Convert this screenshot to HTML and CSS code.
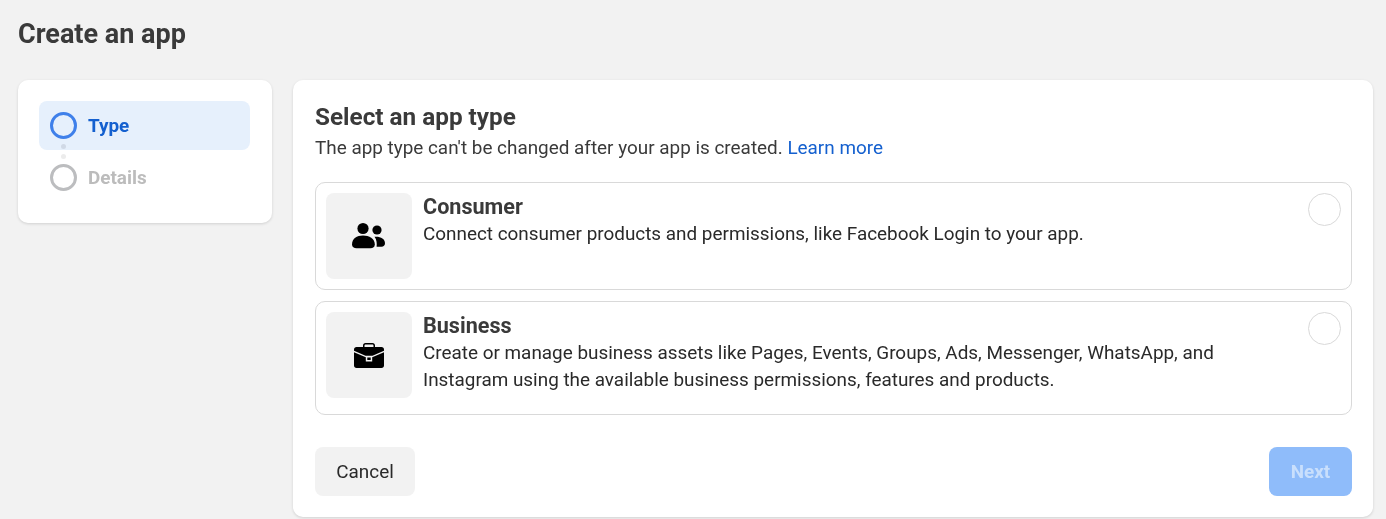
FILE: index.html
```html
<!DOCTYPE html>
<html lang="en">
<head>
<meta charset="utf-8">
<title>Create an app</title>
<link rel="stylesheet" href="styles.css">
</head>
<body>
<div class="page">
<h1 class="page-title">Create an app</h1>
<div class="layout">
  <aside class="card steps">
    <div class="step step-active">
      <span class="step-ring"></span>
      <span class="step-label">Type</span>
    </div>
    <span class="step-dot dot-one"></span>
    <span class="step-dot dot-two"></span>
    <div class="step step-idle">
      <span class="step-ring"></span>
      <span class="step-label">Details</span>
    </div>
  </aside>
  <main class="card panel">
    <h2 class="panel-title">Select an app type</h2>
    <p class="panel-sub">The app type can't be changed after your app is created. <a class="link" href="#">Learn more</a></p>
    <div class="option option-consumer">
      <div class="option-icon">
        <svg width="34" height="28" viewBox="0 0 34 28" aria-hidden="true">
          <circle cx="11" cy="6.500" r="5.600"/>
          <path d="M0 22.500C0 16.500 4.800 13.500 11 13.500C17.200 13.500 22.800 16.500 22.800 22.500C22.800 25 21 26.300 18.500 26.300H4.500C2 26.300 0 25 0 22.500Z"/>
          <circle cx="25" cy="8" r="4.600"/>
          <path d="M22.500 14.800C28 14.200 33 16.500 33 21.300C33 23.600 31.500 24.800 29.500 24.800H24.600C25 21.500 24.800 17.800 22.500 14.800Z"/>
        </svg>
      </div>
      <div class="option-text">
        <h3 class="option-title">Consumer</h3>
        <p class="option-desc">Connect consumer products and permissions, like Facebook Login to your app.</p>
      </div>
      <span class="radio"></span>
    </div>
    <div class="option option-business">
      <div class="option-icon">
        <svg width="30" height="26" viewBox="0 0 30 26" aria-hidden="true">
          <path d="M9 5V3.500C9 2 10 1 11.500 1H18.500C20 1 21 2 21 3.500V5H19.500V3.800C19.500 3 19 2.500 18.200 2.500H11.800C11 2.500 10.500 3 10.500 3.800V5Z"/>
          <path d="M2.500 5H27.500C29 5 30 6 30 7.500V8.800L18.500 13.800H11.500L0 8.800V7.500C0 6 1 5 2.500 5Z"/>
          <path d="M0 10.200L11.800 15.200V19.500H18.200V15.200L30 10.200V23.500C30 25 29 26 27.500 26H2.500C1 26 0 25 0 23.500Z"/>
          <rect x="13.300" y="15.500" width="3.400" height="2.500"/>
        </svg>
      </div>
      <div class="option-text">
        <h3 class="option-title">Business</h3>
        <p class="option-desc">Create or manage business assets like Pages, Events, Groups, Ads, Messenger, WhatsApp, and Instagram using the available business permissions, features and products.</p>
      </div>
      <span class="radio"></span>
    </div>
    <div class="actions">
      <button class="btn btn-cancel" type="button">Cancel</button>
      <button class="btn btn-next" type="button">Next</button>
    </div>
  </main>
</div>
</div>
</body>
</html>
```
FILE: styles.css
```css
* { box-sizing: border-box; }
html, body { height: 100%; }
body {
  margin: 0;
  background: #f2f2f2;
  font-family: Roboto, "Liberation Sans", sans-serif;
  color: #1c1e21;
  overflow: hidden;
}
.page {
  height: 100%;
  padding: 0 13px 0 18px;
  will-change: transform;
}
.page-title {
  margin: 0;
  padding-top: 19px;
  height: 80px;
  font-size: 27px;
  line-height: 30px;
  font-weight: 700;
  color: #3a3a3a;
}
.layout {
  display: flex;
  align-items: flex-start;
  gap: 21px;
}
.card {
  background: #fff;
  border-radius: 10px;
  box-shadow: 0 1px 3px rgba(0, 0, 0, .14);
}
.steps {
  position: relative;
  flex: 0 0 254px;
  height: 143px;
  padding: 21px 22px 0 21px;
}
.step {
  display: flex;
  align-items: center;
  gap: 11px;
  height: 49px;
  padding-left: 11px;
  border-radius: 8px;
  font-size: 18.9px;
  font-weight: 700;
}
.step-active { background: #e6f0fc; color: #1460cf; }
.step-idle { margin-top: 3px; color: #bcbcbc; }
.step-ring {
  width: 27px;
  height: 27px;
  border-radius: 50%;
  border: 3px solid #bcbdbf;
  flex: none;
}
.step-active .step-ring { border-color: #3f80ea; }
.step-dot {
  position: absolute;
  left: 43px;
  width: 5px;
  height: 5px;
  border-radius: 50%;
}
.dot-one { top: 63.500px; background: #d0d9e6; }
.dot-two { top: 73.500px; background: #ececec; }
.panel {
  flex: 1;
  height: 437px;
  padding: 22px 21px 0 22px;
}
.panel-title {
  margin: 0;
  font-size: 24.300px;
  line-height: 30px;
  font-weight: 700;
  color: #3a3a3a;
}
.panel-sub {
  margin: 3px 0 0;
  font-size: 18.900px;
  line-height: 26px;
  color: #3a3a3a;
}
.link { color: #1460cf; text-decoration: none; }
.option {
  display: flex;
  align-items: flex-start;
  gap: 11px;
  border: 1px solid #d9d9d9;
  border-radius: 10px;
  padding: 10px;
}
.option-consumer { margin-top: 21px; height: 108px; }
.option-business { margin-top: 11px; height: 114px; }
.option-icon {
  flex: 0 0 86px;
  height: 86px;
  border-radius: 8px;
  background: #f2f2f2;
  display: flex;
  align-items: center;
  justify-content: center;
}
.option-icon svg { fill: #000; display: block; }
.option-text { flex: 1; max-width: 810px; }
.option-title {
  margin: 0;
  font-size: 21.600px;
  line-height: 27px;
  font-weight: 700;
  color: #3a3a3a;
}
.option-desc {
  margin: 0;
  font-size: 18.900px;
  line-height: 27px;
  color: #2a2a2a;
}
.radio {
  margin-left: auto;
  flex: none;
  width: 33px;
  height: 33px;
  border-radius: 50%;
  border: 1px solid #d9d9d9;
}
.actions {
  display: flex;
  justify-content: space-between;
  margin-top: 32px;
}
.btn {
  height: 49px;
  width: 100px;
  border: 0;
  border-radius: 8px;
  font-family: inherit;
  font-size: 18.900px;
}
.btn-cancel { background: #f2f2f2; color: #2a2a2a; }
.btn-next {
  width: 83px;
  background: #8fbcfa;
  color: #c9dffc;
  font-weight: 700;
}
```
